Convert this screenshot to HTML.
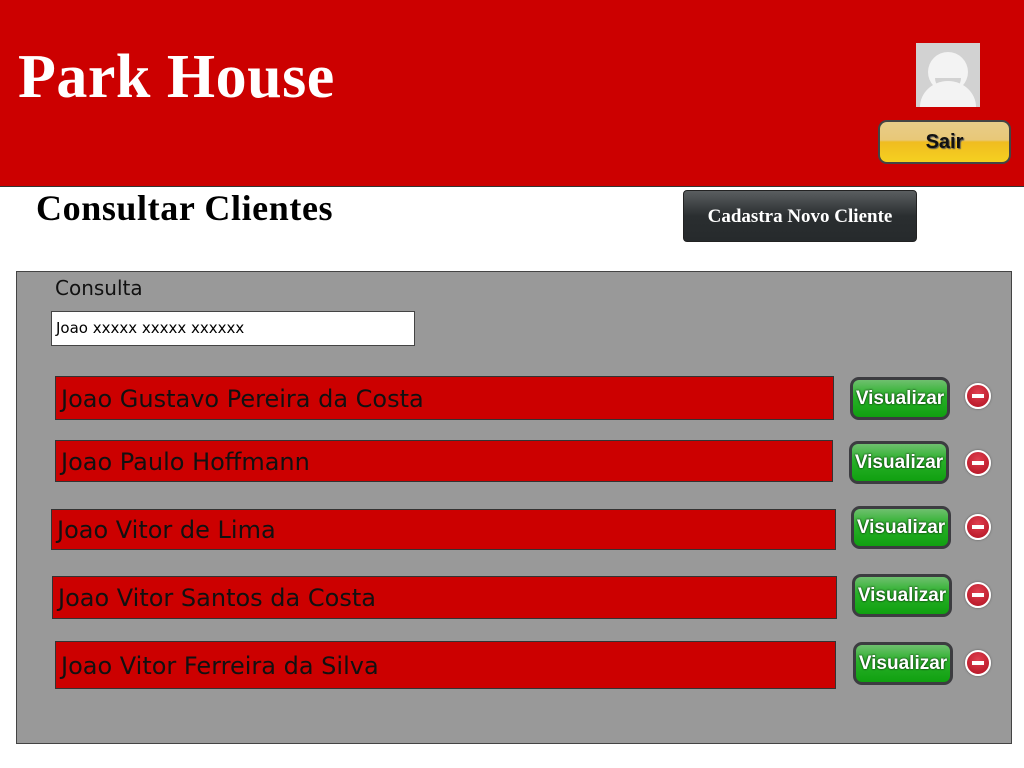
<!DOCTYPE html>
<html><head><style>
*{margin:0;padding:0;box-sizing:border-box}
body{width:1024px;height:768px;background:#fff;position:relative;overflow:hidden;font-family:"Liberation Sans",sans-serif}
.a{position:absolute}
.hdr{left:0;top:0;width:1024px;height:187px;background:#cc0000;border-bottom:1px solid #333}
.title{left:18px;top:42px;color:#fff;font:bold 62px "Liberation Serif",serif;letter-spacing:0.5px}
.av{left:916px;top:43px;width:64px;height:64px;background:#d2d2d2;overflow:hidden}
.sair{left:878px;top:120px;width:133px;height:44px;border:2px solid #444;border-radius:9px;background:linear-gradient(#e8cc88 0%,#e8c878 45%,#f0bc20 50%,#f5d020 100%);font:bold 20px "Liberation Sans",sans-serif;text-align:center;line-height:40px;color:#111;text-shadow:1px 1px 1px #555}
.h2{left:36px;top:187px;font:bold 36px "Liberation Serif",serif;color:#000;letter-spacing:0.6px}
.cad{left:683px;top:190px;width:234px;height:52px;border-radius:4px;background:linear-gradient(#5a5e60,#2a2e30 50%,#262a2c);color:#fff;font:bold 19px "Liberation Serif",serif;text-align:center;line-height:51px;border:1px solid #222}
.panel{left:16px;top:271px;width:996px;height:473px;background:#999;border:1px solid #444}
.lbl{left:55px;top:276px;font:20px "Comic Sans MS","DejaVu Sans",sans-serif;color:#111}
.inp{left:51px;top:311px;width:364px;height:35px;background:#fff;border:1px solid #444;font:15px "Comic Sans MS","DejaVu Sans",sans-serif;padding:7px 4px;white-space:nowrap}
.row{background:#cc0000;border:1px solid #333;font:24px "Comic Sans MS","DejaVu Sans",sans-serif;color:#111;padding-left:5px;white-space:nowrap}
.vis{width:100px;height:43px;border:3px solid #3c3c40;border-radius:9px;background:linear-gradient(#6fc06f 0%,#28b028 45%,#10a010 100%);color:#fff;font:bold 19px "Liberation Sans",sans-serif;text-align:center;line-height:37px;text-shadow:0 0 2px #000}
.min{width:26px;height:26px;border-radius:50%;background:radial-gradient(circle at 50% 35%,#e04050,#b01020);border:2px solid #fff;box-shadow:0 0 2px #555}
.min:after{content:"";position:absolute;left:5px;top:9px;width:12px;height:4px;background:#fff}
</style></head><body>
<div class="a hdr"></div>
<div class="a title">Park House</div>
<div class="a av"><svg width="64" height="64"><circle cx="32" cy="29" r="20" fill="#f3f3f3"/><path d="M19 35 H45 A13 13 0 0 1 19 35Z" fill="#d2d2d2"/><path d="M4 64 A28 26 0 0 1 60 64Z" fill="#f3f3f3"/></svg></div>
<div class="a sair">Sair</div>
<div class="a h2">Consultar Clientes</div>
<div class="a cad">Cadastra Novo Cliente</div>
<div class="a panel"></div>
<div class="a lbl">Consulta</div>
<div class="a inp">Joao xxxxx xxxxx xxxxxx</div>

<div class="a row" style="left:55px;top:376px;width:779px;height:44px;line-height:44px">Joao Gustavo Pereira da Costa</div>
<div class="a vis" style="left:850px;top:377px">Visualizar</div>
<div class="a min" style="left:965px;top:383px"></div>

<div class="a row" style="left:55px;top:440px;width:778px;height:42px;line-height:42px">Joao Paulo Hoffmann</div>
<div class="a vis" style="left:849px;top:441px">Visualizar</div>
<div class="a min" style="left:965px;top:450px"></div>

<div class="a row" style="left:51px;top:509px;width:785px;height:41px;line-height:41px">Joao Vitor de Lima</div>
<div class="a vis" style="left:851px;top:506px">Visualizar</div>
<div class="a min" style="left:965px;top:514px"></div>

<div class="a row" style="left:52px;top:576px;width:785px;height:43px;line-height:43px">Joao Vitor Santos da Costa</div>
<div class="a vis" style="left:852px;top:574px">Visualizar</div>
<div class="a min" style="left:965px;top:582px"></div>

<div class="a row" style="left:55px;top:641px;width:781px;height:48px;line-height:48px">Joao Vitor Ferreira da Silva</div>
<div class="a vis" style="left:853px;top:642px">Visualizar</div>
<div class="a min" style="left:965px;top:650px"></div>
</body></html>
